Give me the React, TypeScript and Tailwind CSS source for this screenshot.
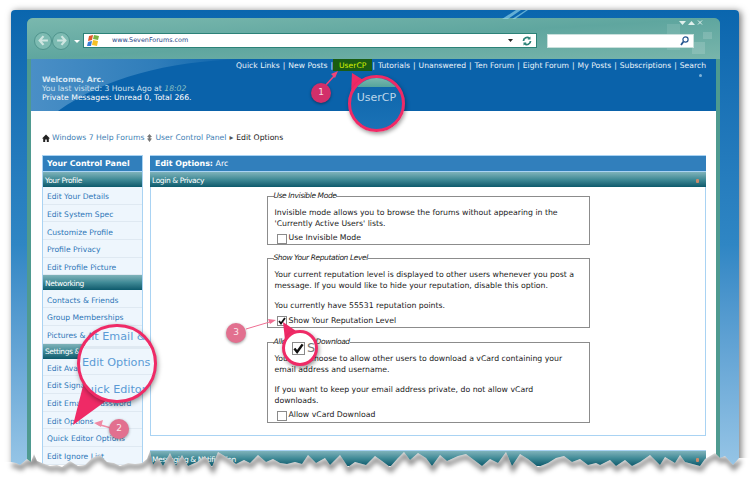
const font = "font-['DejaVu_Sans',sans-serif]";

const navItems = ["Quick Links", "New Posts", "UserCP", "Tutorials", "Unanswered", "Ten Forum", "Eight Forum", "My Posts", "Subscriptions", "Search"];

function SectionBar({ children, caret }: { children: React.ReactNode; caret?: boolean }) {
  return (
    <div className="h-[15px] flex items-center justify-between pl-[2px] pt-[2px] text-[7.5px] tracking-[-0.4px] text-white bg-gradient-to-b from-[#7fb3ba] via-[#3f8a96] to-[#0b5a6c]">
      <span>{children}</span>
      {caret && <span className="w-[3px] h-[4px] mr-[7px] bg-[#c98a6a] rounded-[1px]" />}
    </div>
  );
}

function SideLink({ children }: { children: React.ReactNode }) {
  return (
    <div className="h-[17.7px] flex items-center pl-[4px] pt-[3px] border-b border-[#dfe9f2] bg-[#eef6fd] text-[#2f76b8] text-[7.6px] whitespace-nowrap">
      {children}
    </div>
  );
}

function Box({ legend, h, children }: { legend: string; h: string; children: React.ReactNode }) {
  return (
    <fieldset className={`w-[323px] mx-auto border border-[#8c8c8c] px-[7px] ${h}`}>
      <legend className="italic text-[7.5px] tracking-[-0.4px] text-[#222] ml-[-1px] leading-[8px] px-0">{legend}</legend>
      {children}
    </fieldset>
  );
}

function Check({ checked, children }: { checked?: boolean; children: React.ReactNode }) {
  return (
    <div className="flex items-center gap-[2px] ml-[2px] mt-[4px] h-[11px]">
      <span className="w-[10px] h-[10px] border border-[#8a8a8a] bg-white flex items-center justify-center shrink-0">
        {checked && (
          <svg width="8" height="8" viewBox="0 0 8 8"><path d="M1 4l2 2.5L7 1" fill="none" stroke="#111" strokeWidth="1.8" /></svg>
        )}
      </span>
      <span>{children}</span>
    </div>
  );
}

const edge =
  "M11 462 L16 463 L20 465 L27 459 L31 462 L34 454 L37 461 L42 463 L50 466 L57 465 L62 467 L70 461 L78 466 L85 465 L92 458 L100 455 L107 462 L114 463 L120 466 L128 463 L135 464 L142 463 L147 459 L150 451 L153 465 L158 458 L163 466 L170 453 L176 466 L182 455 L188 466 L197 462 L205 456 L212 467 L218 452 L228 458 L236 464 L244 460 L250 463 L258 455 L266 462 L273 459 L280 463 L287 464 L295 462 L302 464 L308 455 L316 463 L325 458 L330 465 L340 455 L348 467 L355 462 L366 465 L375 456 L382 461 L390 467 L398 458 L404 452 L410 460 L418 453 L426 458 L432 466 L440 455 L447 461 L458 456 L466 454 L474 460 L482 466 L490 459 L498 463 L506 452 L512 466 L520 454 L528 459 L538 467 L548 463 L556 458 L564 456 L572 462 L580 459 L588 465 L596 463 L600 465 L610 460 L616 466 L625 460 L632 466 L640 462 L650 455 L660 465 L665 457 L675 463 L680 455 L685 462 L700 466 L705 459 L715 453 L720 458 L725 456 L733 465 L739 458";
const torn = `M0 480 L0 462 L${edge.slice(1)} L750 458 L750 480 Z`;

export default function App() {
  return (
    <div className={`relative w-[750px] h-[480px] overflow-hidden bg-white pt-[10px] pl-[11px] ${font}`}>
      <div className="w-[728px] h-[470px] rounded-t-[4px] bg-gradient-to-b from-[#0a66ae] via-[#2f86c4] to-[#9cc9e8] pt-[8px] pl-[16px] pr-[19px] shadow-[2px_1px_7px_rgba(0,0,0,0.55)]">
        <div className="h-full rounded-t-[6px] bg-[#4f9a90] px-[4px]">
          {/* toolbar */}
          <div className="relative h-[41px] -mx-[4px] pl-[7px] rounded-t-[6px] bg-gradient-to-br from-[#7ab8ae] via-[#5fa69f] to-[#78b5ab] flex items-center pt-[4px] overflow-hidden">
            <span className="absolute right-[40px] top-[6px] w-[13px] h-[26px] bg-white/10" />
            <span className="absolute right-[8px] top-[14px] w-[9px] h-[7px] bg-white/15" />
            <span className="absolute right-[15px] top-[24px] w-[13px] h-[12px] bg-white/15" />
            <div className="relative flex items-center w-[49px]">
              <span className="w-[18px] h-[18px] rounded-full bg-[#7dbbb2] border border-[#4f948d] flex items-center justify-center">
                <svg width="11" height="11" viewBox="0 0 10 10"><path d="M5 1L1.500 5 5 9M2 5h7" fill="none" stroke="#cfe6e1" strokeWidth="2" /></svg>
              </span>
              <span className="w-[18px] h-[18px] rounded-full bg-[#7dbbb2] border border-[#4f948d] flex items-center justify-center">
                <svg width="11" height="11" viewBox="0 0 10 10"><path d="M5 1l3.500 4L5 9M8 5H1" fill="none" stroke="#cfe6e1" strokeWidth="2" /></svg>
              </span>
              <svg className="ml-[4px]" width="6" height="4" viewBox="0 0 6 4"><path d="M0 1h6L3 4z" fill="#fff" /></svg>
            </div>
            <div className="w-[454px] h-[15px] bg-white border border-[#2c8278] flex items-center relative">
              <svg className="ml-[3px]" width="14" height="13" viewBox="0 0 14 13">
                <path d="M2 2l4-1-1 5-4 1z" fill="#e2572b" />
                <path d="M7 1l5 1-1 4-5-1z" fill="#7cb342" />
                <path d="M1 8l4-1-1 5-4 0z" fill="#3b7dd8" />
                <path d="M6 6l5 1-1 5-5-1z" fill="#f6c026" />
              </svg>
              <span className="ml-[11px] text-[6.4px] text-[#1c3f86]">www.SevenForums.com</span>
              <svg className="absolute left-[424px] top-[5px]" width="5" height="3" viewBox="0 0 5 3"><path d="M0 0h5L2.500 3z" fill="#222" /></svg>
              <svg className="absolute left-[438px] top-[2px]" width="10" height="10" viewBox="0 0 10 10">
                <path d="M1.500 5a3.500 3.500 0 0 1 6-2.500M8.500 5a3.500 3.500 0 0 1-6 2.500" fill="none" stroke="#2c8278" strokeWidth="1.800" />
                <path d="M8.500 0.500v3h-3zM1.500 9.500v-3h3z" fill="#2c8278" />
              </svg>
            </div>
            <div className="relative ml-[10px] w-[147px] h-[14px] bg-white border border-[#c9e0dc] flex items-center justify-end pr-[4px]">
              <svg width="9" height="10" viewBox="0 0 9 10">
                <circle cx="5.500" cy="3.500" r="2.600" fill="none" stroke="#24558f" strokeWidth="1.200" />
                <path d="M3.500 5.500L1 9" stroke="#24558f" strokeWidth="1.800" />
              </svg>
            </div>
            <div className="absolute right-[17px] top-[2px] flex items-center gap-[2px]">
              <svg width="7" height="4" viewBox="0 0 7 4"><path d="M0 0h7L3.500 4z" fill="#dff0ec" /></svg>
              <svg width="7" height="4" viewBox="0 0 7 4"><path d="M0 4h7L3.500 0z" fill="#dff0ec" /></svg>
              <svg width="6" height="5" viewBox="0 0 6 5"><path d="M1 0.500l4 4M5 0.500l-4 4" stroke="#dff0ec" strokeWidth="1" /></svg>
            </div>
          </div>
          {/* blue header */}
          <div className="relative h-[52px] bg-[#0a62aa] text-white text-[7.7px] overflow-hidden">
            <svg className="absolute left-0 top-0" width="210" height="52" viewBox="0 0 210 52">
              <defs>
                <linearGradient id="sheen" x1="0" y1="0" x2="1" y2="0">
                  <stop offset="0" stopColor="#4a8fc6" />
                  <stop offset="0.6" stopColor="#2f7dba" />
                  <stop offset="1" stopColor="#0a62aa" />
                </linearGradient>
              </defs>
              <path d="M0 0H210C135 3 75 18 27 52H0z" fill="url(#sheen)" />
            </svg>
            <div className="relative flex justify-end items-start h-[12px] pr-[10px] text-[7.65px] text-[#eaf3fa] whitespace-pre">
              {navItems.map((n, i) => (
                <span key={n} className="flex items-start">
                  {i > 0 && <span className="px-[3px] h-[12px] pt-[2px] leading-[9px]">|</span>}
                  {n === "UserCP" ? (
                    <span className="h-[12px] px-[6px] -mx-[3px] pt-[2px] leading-[9px] bg-[#1a5c12] text-[#d3f000]">{n}</span>
                  ) : (
                    <span className="h-[12px] pt-[2px] leading-[9px]">{n}</span>
                  )}
                </span>
              ))}
            </div>
            <div className="relative pl-[11px] pt-[4px] leading-[9px]">
              <div className="font-bold text-[#d7e7f3]">Welcome, Arc.</div>
              <div className="text-[#cfe1ee]">You last visited: 3 Hours Ago at <i className="text-[#8ac0c2]">18:02</i></div>
              <div>Private Messages: Unread 0, Total 266.</div>
            </div>
            <span className="absolute right-[14px] top-[15px] w-[3px] h-[3px] rounded-full bg-[#7fb2d8]" />
          </div>
          {/* white body */}
          <div className="h-[358px] bg-white px-[11px] pt-[19px] overflow-hidden text-[7.75px]">
            <div className="flex items-center h-[12px] mt-[2px] mb-[11px] text-[7.7px] whitespace-nowrap">
              <svg width="8" height="8" viewBox="0 0 8 8"><path d="M4 0.500L0 4.500h1.200V8h2V5.500h1.600V8h2V4.500H8z" fill="#222" /></svg>
              <span className="ml-[2px] text-[#3f7fb5]">Windows 7 Help Forums</span>
              <svg className="mx-[3px]" width="5" height="8" viewBox="0 0 5 8"><path d="M2.500 0L5 3H3.500v1.500H5L2.500 8 0 4.500h1.500V3H0z" fill="#777" /></svg>
              <span className="text-[#3f7fb5]">User Control Panel</span>
              <span className="text-[#555] mx-[3px]">▸</span>
              <span className="text-[#222]">Edit Options</span>
            </div>
            <div className="flex gap-[7px] items-start">
              {/* sidebar */}
              <div className="w-[101px] shrink-0 border-x border-[#a9d3f3] h-[320px]">
                <div className="h-[17px] bg-[#317fbc] border-y border-[#a9d3f3] text-white font-bold text-[7.9px] flex items-center pl-[4px] whitespace-nowrap">Your Control Panel</div>
                <SectionBar>Your Profile</SectionBar>
                <SideLink>Edit Your Details</SideLink>
                <SideLink>Edit System Spec</SideLink>
                <SideLink>Customize Profile</SideLink>
                <SideLink>Profile Privacy</SideLink>
                <SideLink>Edit Profile Picture</SideLink>
                <SectionBar>Networking</SectionBar>
                <SideLink>Contacts &amp; Friends</SideLink>
                <SideLink>Group Memberships</SideLink>
                <SideLink>Pictures &amp; Albums</SideLink>
                <SectionBar>Settings &amp; Options</SectionBar>
                <SideLink>Edit Avatar</SideLink>
                <SideLink>Edit Signature</SideLink>
                <SideLink>Edit Email &amp; Password</SideLink>
                <SideLink>Edit Options</SideLink>
                <SideLink>Quick Editor Options</SideLink>
                <SideLink>Edit Ignore List</SideLink>
              </div>
              {/* main */}
              <div className="w-[556px] shrink-0">
                <div className="h-[17px] bg-[#317fbc] border-y border-[#a9d3f3] text-white text-[7.9px] flex items-center pl-[5px]">
                  <b>Edit Options:</b>&nbsp;Arc
                </div>
                <SectionBar caret>Login &amp; Privacy</SectionBar>
                <div className="h-[249px] border-x border-b border-[#a9d3f3] pt-[5px] text-[#222] leading-[10.5px]">
                  <Box legend="Use Invisible Mode" h="h-[53px]">
                    <p className="mt-[8px]">Invisible mode allows you to browse the forums without appearing in the 'Currently Active Users' lists.</p>
                    <Check>Use Invisible Mode</Check>
                  </Box>
                  <div className="h-[9px]" />
                  <Box legend="Show Your Reputation Level" h="h-[74px]">
                    <p className="mt-[8px]">Your current reputation level is displayed to other users whenever you post a message. If you would like to hide your reputation, disable this option.</p>
                    <p className="mt-[10px]">You currently have 55531 reputation points.</p>
                    <Check checked>Show Your Reputation Level</Check>
                  </Box>
                  <div className="h-[10px]" />
                  <Box legend="Allow vCard Download" h="h-[85px]">
                    <p className="mt-[8px]">You may choose to allow other users to download a vCard containing your email address and username.</p>
                    <p className="mt-[10px]">If you want to keep your email address private, do not allow vCard<br />downloads.</p>
                    <Check>Allow vCard Download</Check>
                  </Box>
                </div>
                <div className="h-[14px]" />
                <div className="border-t border-[#a9d3f3]">
                  <SectionBar caret>Messaging &amp; Notification</SectionBar>
                </div>
              </div>
            </div>
          </div>
        </div>
      </div>

      {/* light streak on the frame */}
      <svg className="absolute left-[490px] top-[10px] pointer-events-none" width="50" height="9" viewBox="0 0 50 9">
        <path d="M12 9L26 0h5L18 9zM22 9L36 0h2L25 9z" fill="#9fe0ee" fillOpacity="0.6" />
      </svg>

      {/* torn paper edge */}
      <svg className="absolute left-0 top-0 pointer-events-none" width="750" height="480" viewBox="0 0 750 480">
        <defs>
          <clipPath id="tornClip"><path d={torn} /></clipPath>
          <filter id="tornBlur" x="-5%" y="-100%" width="110%" height="300%"><feGaussianBlur stdDeviation="2.500" /></filter>
        </defs>
        <path d={torn} fill="#fff" />
        <g clipPath="url(#tornClip)">
          <path d={edge} transform="translate(1 3)" fill="none" stroke="#000" strokeOpacity="0.5" strokeWidth="4" filter="url(#tornBlur)" />
        </g>
      </svg>

      {/* annotations: arrows */}
      <svg className="absolute left-0 top-0 pointer-events-none" width="750" height="480" viewBox="0 0 750 480">
        <path d="M325 86L335 75" stroke="#f0457a" strokeWidth="1.500" />
        <path d="M338 71l-7 3 4 4z" fill="#f0457a" />
        <path d="M352 73L373 86 351 94z" fill="#ef2a66" />
        <path d="M111 428L97 424" stroke="#f08aa5" strokeWidth="1.500" />
        <path d="M94 423l9-3-2 7z" fill="#f08aa5" />
        <path d="M73 425L84 382 110 398z" fill="#ef2a66" />
        <path d="M246 329L273 321" stroke="#ef6f93" strokeWidth="1" />
        <path d="M276 320l-8-1 2 5z" fill="#ef6f93" />
        <path d="M283 322L285 340 299 333z" fill="#ef2a66" />
      </svg>

      {/* magnifier: UserCP */}
      <div className="absolute left-[348px] top-[75px] w-[57px] h-[57px] rounded-full border-[3px] border-[#ef2a66] bg-gradient-to-b from-[#0c64aa] to-[#1a72b6] overflow-hidden shadow-[1px_2px_4px_rgba(0,0,0,0.4)] text-[11px] text-[#bcd6ea]">
        <div className="h-[9px] bg-gradient-to-b from-[#7ab8ae] to-[#55a49c]" />
        <div className="text-center leading-[14px] pt-[4px]">UserCP</div>
      </div>

      {/* magnifier: Edit Options */}
      <div className="absolute left-[77px] top-[324px] w-[80px] h-[79px] rounded-full border-[3px] border-[#ef2a66] bg-[#eef6fd] overflow-hidden shadow-[1px_2px_5px_rgba(0,0,0,0.4)] text-[11.2px] text-[#5b9bd5] whitespace-nowrap">
        <div className="h-[22px] border-b-[3px] border-[#dfe9f2] flex items-center -ml-[3px] pt-[1px]">Edit Email &amp; Password</div>
        <div className="h-[26px] border-b border-[#dfe9f2] flex items-center pl-[2px] pt-[4px]">Edit Options</div>
        <div className="h-[26px] flex items-center -ml-[2px] pt-[4px]">Quick Editor Options</div>
      </div>

      {/* magnifier: checkbox */}
      <div className="absolute left-[282px] top-[330px] w-[36px] h-[36px] rounded-full border-[3px] border-[#ef2a66] bg-white overflow-hidden shadow-[1px_2px_4px_rgba(0,0,0,0.4)] flex items-center pl-[7px] gap-[2px] text-[13px] text-[#777]">
        <span className="w-[13px] h-[13px] border border-[#8a8a8a] flex items-center justify-center shrink-0">
          <svg width="11" height="11" viewBox="0 0 8 8"><path d="M1 4l2 2.500L7 1" fill="none" stroke="#111" strokeWidth="1.800" /></svg>
        </span>
        <span>S</span>
      </div>

      {/* number badges */}
      <span className="absolute left-[311px] top-[83px] w-[20px] h-[20px] rounded-full bg-[#d22f6a] text-[#f7dbe5] text-[9px] flex items-center justify-center shadow-[0_1px_3px_rgba(0,0,0,0.4)]">1</span>
      <span className="absolute left-[109px] top-[419px] w-[20px] h-[20px] rounded-full bg-[#e2708f] text-[#fbe7ec] text-[9px] flex items-center justify-center shadow-[0_1px_3px_rgba(0,0,0,0.4)]">2</span>
      <span className="absolute left-[226px] top-[323px] w-[20px] h-[20px] rounded-full bg-[#e2708f] text-[#fbe7ec] text-[9px] flex items-center justify-center shadow-[0_1px_3px_rgba(0,0,0,0.4)]">3</span>
    </div>
  );
}
